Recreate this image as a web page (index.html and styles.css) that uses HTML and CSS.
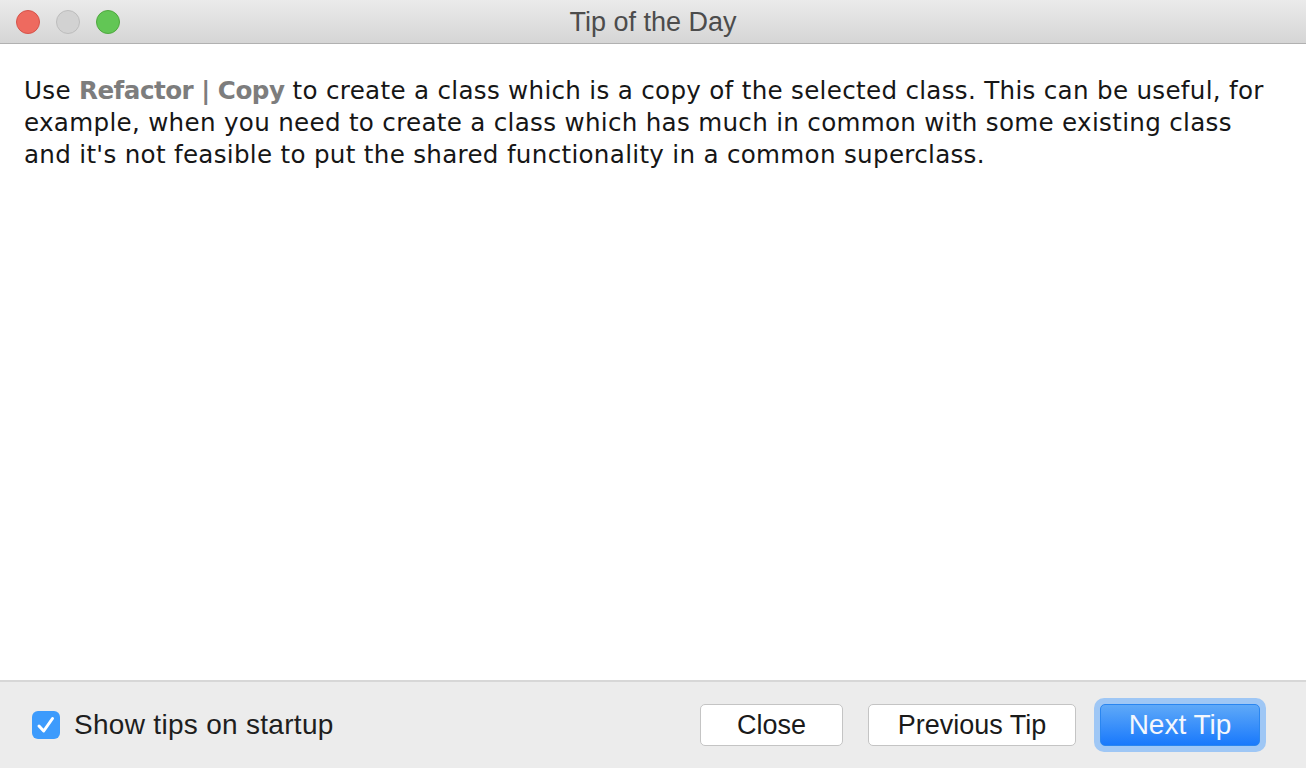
FILE: index.html
```html
<!DOCTYPE html>
<html>
<head>
<meta charset="utf-8">
<link rel="stylesheet" href="styles.css">
</head>
<body>
<div class="window">
  <div class="titlebar">
    <div class="lights">
      <span class="light red"></span>
      <span class="light gray"></span>
      <span class="light green"></span>
    </div>
    <div class="title">Tip of the Day</div>
  </div>
  <div class="content">
    <p class="tip">Use <b class="menu">Refactor | Copy</b> to create a class which is a copy of the selected class. This can be useful, for example, when you need to create a class which has much in common with some existing class and it's not feasible to put the shared functionality in a common superclass.</p>
  </div>
  <div class="footer">
    <label class="check">
      <span class="box"><svg width="22" height="22" viewBox="0 0 22 22"><path d="M4 12 L8.7 17 L17.5 4.5" fill="none" stroke="#fff" stroke-width="3" stroke-linecap="round" stroke-linejoin="round"/></svg></span>
      <span class="label">Show tips on startup</span>
    </label>
    <div class="buttons">
      <button class="btn close">Close</button>
      <button class="btn prev">Previous Tip</button>
      <span class="ring"><button class="btn primary">Next Tip</button></span>
    </div>
  </div>
</div>
</body>
</html>
```
FILE: styles.css
```css
html, body {
  margin: 0;
  padding: 0;
  width: 1306px;
  height: 768px;
  overflow: hidden;
}
.window {
  width: 1306px;
  height: 768px;
  display: flex;
  flex-direction: column;
  background: #fff;
}
.titlebar {
  height: 43px;
  flex: none;
  position: relative;
  display: flex;
  align-items: center;
  justify-content: center;
  background: linear-gradient(#ebebeb, #d5d5d5);
  border-bottom: 1px solid #b1b1b1;
}
.lights {
  position: absolute;
  left: 16px;
  top: 10px;
  display: flex;
  gap: 16px;
}
.light {
  width: 24px;
  height: 24px;
  border-radius: 50%;
  box-sizing: border-box;
}
.red { background: #ee6a5f; border: 1px solid #d6534a; }
.gray { background: #d2d2d2; border: 1px solid #bdbdbd; }
.green { background: #62c655; border: 1px solid #4fa83f; }
.title {
  font-family: "Liberation Sans", Arial, sans-serif;
  font-size: 27px;
  color: #4c4c4c;
  margin-top: 1px;
}
.content {
  flex: 1;
  padding: 31px 30px 0 24px;
}
.tip {
  margin: 0;
  font-family: "DejaVu Sans", sans-serif;
  font-size: 24.6px;
  letter-spacing: 0.3px;
  line-height: 32px;
  color: #161616;
}
.menu {
  color: #7d7d7d;
  letter-spacing: -0.5px;
}
.footer {
  height: 88px;
  flex: none;
  box-sizing: border-box;
  border-top: 2px solid #d7d7d7;
  background: #ececec;
  display: flex;
  align-items: center;
  justify-content: space-between;
  padding: 0 40px 0 32px;
}
.check {
  display: flex;
  align-items: center;
  gap: 14px;
}
.box {
  width: 28px;
  height: 28px;
  border-radius: 6px;
  background: #3d9bfc;
  display: flex;
  align-items: center;
  justify-content: center;
}
.label {
  font-family: "Liberation Sans", Arial, sans-serif;
  font-size: 28px;
  letter-spacing: 0.3px;
  color: #1e1e1e;
}
.buttons {
  display: flex;
  align-items: center;
  gap: 25px;
}
.btn {
  font-family: "Liberation Sans", Arial, sans-serif;
  font-size: 27px;
  color: #1a1a1a;
  height: 42px;
  border: 1px solid #c4c4c4;
  border-radius: 5px;
  background: #fff;
  padding: 0;
  margin: 0;
}
.close { width: 143px; }
.prev { width: 208px; }
.ring {
  display: flex;
  padding: 6px;
  margin-left: -7px;
  border-radius: 10px;
  background: #9fc7f5;
}
.primary {
  width: 160px;
  font-size: 28px;
  color: #f4f7fd;
  border: 1px solid #2a86f0;
  background: linear-gradient(#5fa9f8, #1979fc);
}
```
